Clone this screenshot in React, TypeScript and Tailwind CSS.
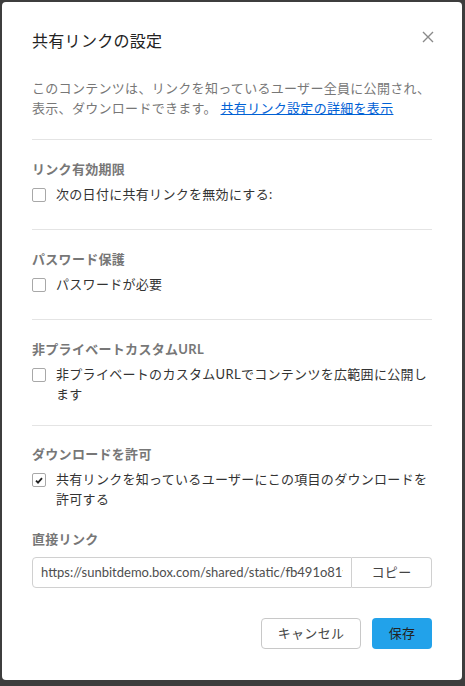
import React from 'react'

const font = { fontFamily: 'Lato, "Noto Sans CJK JP", sans-serif' }

function Checkbox({ checked }: { checked?: boolean }) {
  return (
    <span className="mt-[4px] flex h-[14px] w-[14px] shrink-0 items-center justify-center rounded-[2px] border border-[#a8a8a8] bg-white">
      {checked && (
        <svg width="8" height="7" viewBox="0 0 8 7">
          <path d="M1 3.6 L3 5.6 L7 1.2" fill="none" stroke="#222" strokeWidth="1.8" />
        </svg>
      )}
    </span>
  )
}

function Section({
  title,
  label,
  checked,
  multiline,
  last,
}: {
  title: string
  label: string
  checked?: boolean
  multiline?: boolean
  last?: boolean
}) {
  let box = 'border-b border-[#e4e4e4] pt-[19px] pb-[25px]'
  if (multiline) box = 'border-b border-[#e4e4e4] pt-[19px] pb-[21px]'
  if (last) box = 'pt-[18px]'
  return (
    <div className={box}>
      <div className="text-[13px] leading-5 font-bold text-[#777]">{title}</div>
      <label className="mt-[5px] flex items-start gap-[10px]">
        <Checkbox checked={checked} />
        <span className="text-[13px] leading-5 text-[#333]">{label}</span>
      </label>
    </div>
  )
}

export default function App() {
  return (
    <div className="h-screen w-full bg-[#3d3d3d] pt-[2px] pl-[2px] tracking-[0.3px]" style={font}>
      <div className="w-[460px] rounded-[4px] bg-white px-[30px] pt-[28px] pb-[31px]">
        <div className="flex items-start justify-between">
          <h1 className="text-[16px] leading-[22px] text-[#222]">共有リンクの設定</h1>
          <button className="-mt-[1px] -mr-[4px] p-[2px]">
            <svg width="12" height="12" viewBox="0 0 12 12">
              <path d="M1 1 L11 11 M11 1 L1 11" stroke="#8a8a8a" strokeWidth="1.4" />
            </svg>
          </button>
        </div>

        <p className="mt-[26px] border-b border-[#e4e4e4] pb-[21px] text-[13px] leading-5 text-[#777]">
          このコンテンツは、リンクを知っているユーザー全員に公開され、表示、ダウンロードできます。{' '}
          <a className="text-[#0061d5] underline" href="#">
            共有リンク設定の詳細を表示
          </a>
        </p>

        <Section title="リンク有効期限" label="次の日付に共有リンクを無効にする:" />
        <Section title="パスワード保護" label="パスワードが必要" />
        <Section
          title="非プライベートカスタムURL"
          label="非プライベートのカスタムURLでコンテンツを広範囲に公開します"
          multiline
        />
        <Section
          title="ダウンロードを許可"
          label="共有リンクを知っているユーザーにこの項目のダウンロードを許可する"
          checked
          last
        />

        <div className="mt-[20px] text-[13px] leading-5 font-bold text-[#777]">直接リンク</div>
        <div className="mt-[8px] flex h-[31px]">
          <input
            readOnly
            value="https://sunbitdemo.box.com/shared/static/fb491o81vq2x7h"
            className="min-w-0 flex-1 rounded-l-[4px] border border-[#d0d0d0] px-[8px] text-[13px] tracking-normal text-[#4e4e4e] outline-none"
          />
          <button className="w-[80px] rounded-r-[4px] border border-l-0 border-[#d0d0d0] bg-white text-[13px] text-[#444]">
            コピー
          </button>
        </div>

        <div className="mt-[30px] flex justify-end gap-[11px]">
          <button className="h-[31px] w-[100px] rounded-[4px] border border-[#c8c8c8] bg-white text-[13px] text-[#444]">
            キャンセル
          </button>
          <button className="h-[31px] w-[60px] rounded-[4px] bg-[#22a2ea] text-[13px] text-[#222]">
            保存
          </button>
        </div>
      </div>
    </div>
  )
}
